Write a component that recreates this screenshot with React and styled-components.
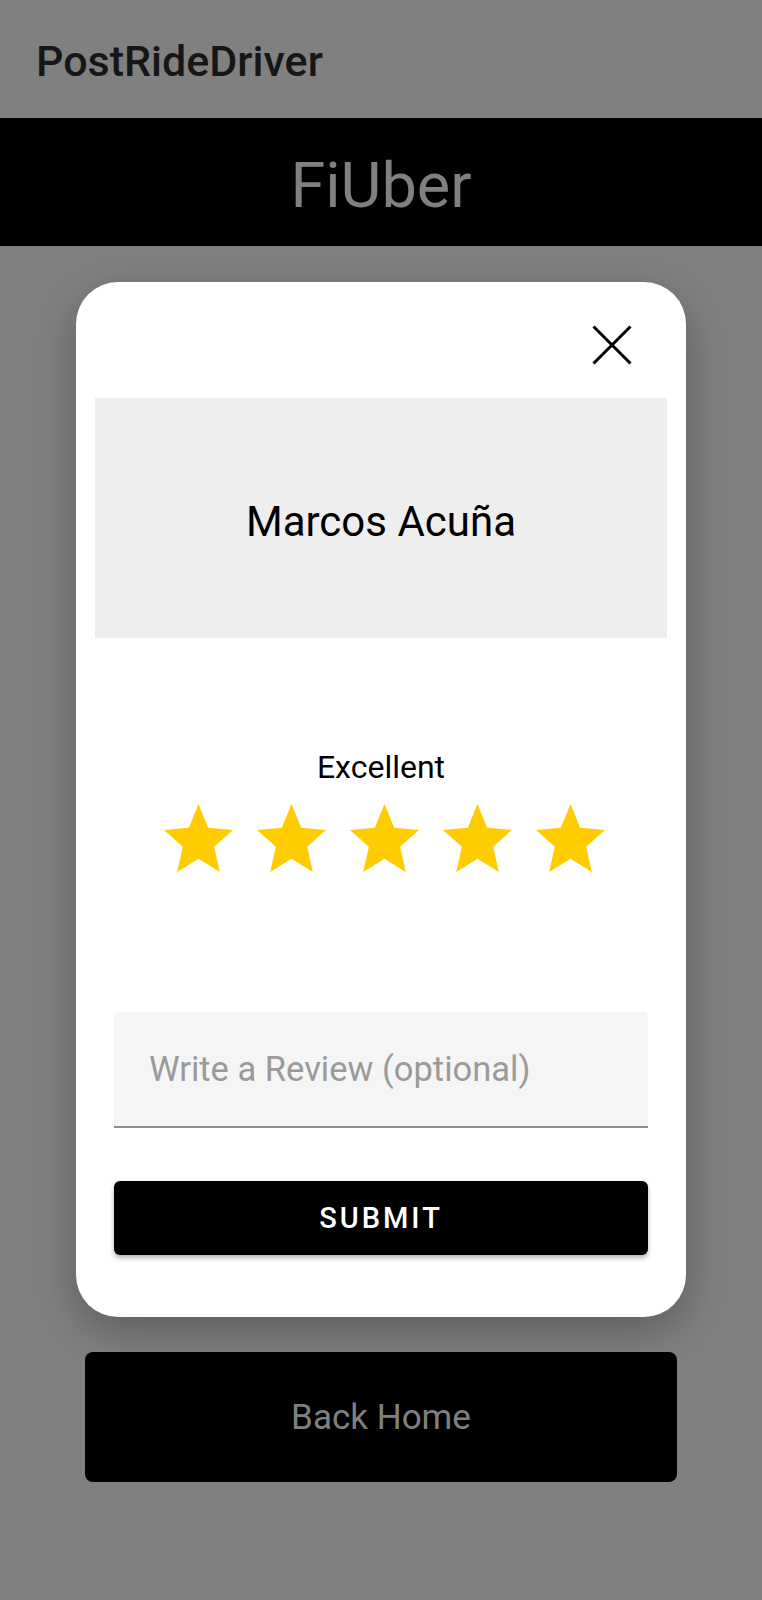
import React from 'react'
import styled, { createGlobalStyle } from 'styled-components'

const GlobalStyle = createGlobalStyle`
  html, body {
    margin: 0;
    padding: 0;
    background-color: #808080;
    font-family: Roboto, "Noto Sans", sans-serif;
  }
  * {
    box-sizing: border-box;
  }
`

const Screen = styled.div`
  min-height: 1600px;
  background-color: #808080;
  padding-bottom: 40px;
`

const NavHeader = styled.header`
  height: 118px;
  padding: 36px 0 0 36px;
`

const NavTitle = styled.h1`
  margin: 0;
  font-size: 43px;
  line-height: 50px;
  font-weight: 500;
  color: #161616;
`

const Brand = styled.div`
  height: 128px;
  background-color: #000;
  display: flex;
  align-items: center;
  justify-content: center;
  padding-top: 6px;
  color: #808080;
  font-size: 63px;
`

const Card = styled.div`
  width: 610px;
  margin: 36px auto 0;
  padding-bottom: 62px;
  background-color: #fff;
  border-radius: 42px;
  box-shadow: 0 14px 44px rgba(0, 0, 0, 0.28);
  display: flex;
  flex-direction: column;
`

const CloseRow = styled.div`
  height: 116px;
  display: flex;
  justify-content: flex-end;
  align-items: flex-start;
  padding: 43px 54px 0 0;
`

const CloseButton = styled.button`
  width: 40px;
  height: 40px;
  padding: 0;
  border: none;
  background: none;
  cursor: pointer;
  display: block;
`

const NameBox = styled.div`
  margin: 0 19px;
  height: 240px;
  background-color: #eeeeee;
  display: flex;
  align-items: center;
  justify-content: center;
  padding-top: 6px;
  font-size: 42px;
  color: #000;
`

const RatingLabel = styled.div`
  margin-top: 110px;
  text-align: center;
  font-size: 32px;
  line-height: 38px;
  color: #000;
`

const Stars = styled.div`
  margin-top: 18px;
  padding-left: 6px;
  display: flex;
  justify-content: center;
  gap: 24px;
`

const ReviewInput = styled.input`
  margin: 140px 38px 0;
  height: 116px;
  padding: 0 35px;
  border: none;
  border-bottom: 2px solid #8c8c8c;
  border-radius: 5px 5px 0 0;
  background-color: #f5f5f5;
  font-family: Roboto, sans-serif;
  font-size: 34.5px;
  color: #222;
  outline: none;

  &::placeholder {
    color: #9a9a9a;
  }
`

const SubmitButton = styled.button`
  margin: 53px 38px 0;
  height: 74px;
  border: none;
  border-radius: 6px;
  background-color: #000;
  color: #fff;
  font-family: Roboto, sans-serif;
  font-size: 29px;
  font-weight: 500;
  letter-spacing: 3px;
  box-shadow: 0 3px 5px rgba(0, 0, 0, 0.3);
  cursor: pointer;
`

const HomeButton = styled.button`
  display: block;
  width: 592px;
  height: 130px;
  margin: 35px auto 0;
  border: none;
  border-radius: 8px;
  background-color: #000;
  color: #808080;
  font-family: Roboto, sans-serif;
  font-size: 35px;
  cursor: pointer;
`

const Star = () => (
  <svg width="69" height="68" viewBox="2 2 20 19" preserveAspectRatio="none">
    <path
      fill="#ffcc00"
      d="M12 17.27L18.18 21l-1.64-7.03L22 9.24l-7.19-.61L12 2 9.19 8.63 2 9.24l5.46 4.73L5.82 21z"
    />
  </svg>
)

const App = () => {
  const rating = 5

  return (
    <Screen>
      <GlobalStyle />
      <NavHeader>
        <NavTitle>PostRideDriver</NavTitle>
      </NavHeader>
      <Brand>FiUber</Brand>

      <Card>
        <CloseRow>
          <CloseButton aria-label="close">
            <svg width="40" height="40" viewBox="0 0 40 40">
              <path d="M1.5 1.5L38.5 38.5M38.5 1.5L1.5 38.5" stroke="#000" strokeWidth="3" />
            </svg>
          </CloseButton>
        </CloseRow>
        <NameBox>Marcos Acuña</NameBox>
        <RatingLabel>Excellent</RatingLabel>
        <Stars>
          {Array.from({ length: rating }).map((_, i) => (
            <Star key={i} />
          ))}
        </Stars>
        <ReviewInput placeholder="Write a Review (optional)" />
        <SubmitButton>SUBMIT</SubmitButton>
      </Card>

      <HomeButton>Back Home</HomeButton>
    </Screen>
  )
}

export default App
